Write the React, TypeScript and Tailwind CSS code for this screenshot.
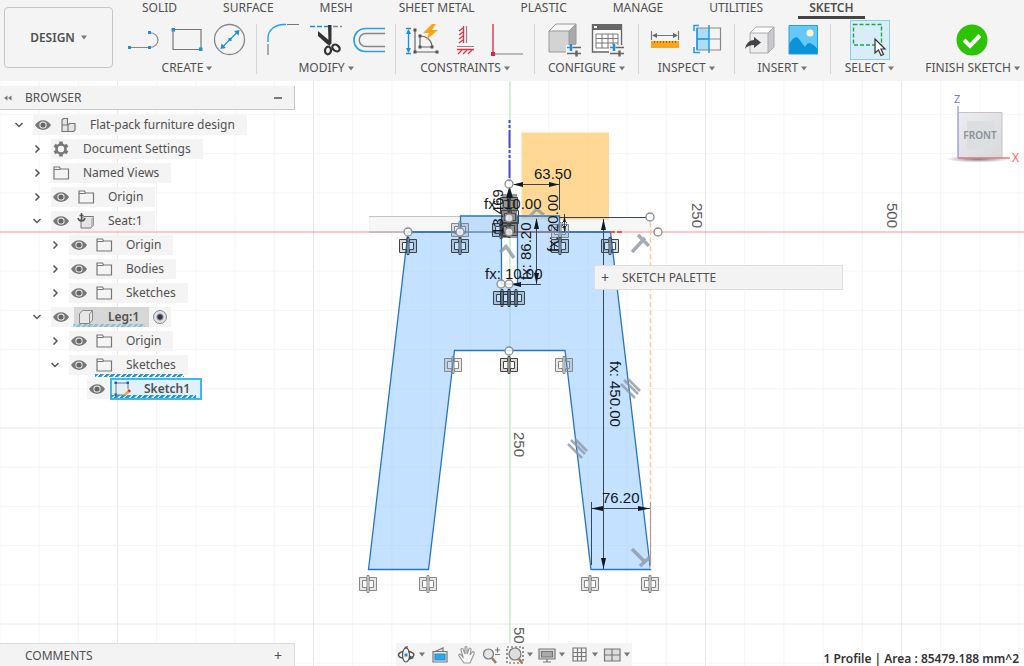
import type { ReactNode } from "react";

type ToolGroupProps = {
  label: string;
  className?: string;
  children: ReactNode;
};

type TreeItem = {
  name: string;
  level: 0 | 1 | 2 | 3;
  open?: boolean;
  icon: "component" | "gear" | "folder" | "anchored" | "body" | "sketch";
  state?: "active" | "touched" | "selected";
};

const tabs = ["SOLID", "SURFACE", "MESH", "SHEET METAL", "PLASTIC", "MANAGE", "UTILITIES", "SKETCH"];

const tree: TreeItem[] = [
  { name: "Flat-pack furniture design", level: 0, open: true, icon: "component" },
  { name: "Document Settings", level: 1, open: false, icon: "gear" },
  { name: "Named Views", level: 1, open: false, icon: "folder" },
  { name: "Origin", level: 1, open: false, icon: "folder" },
  { name: "Seat:1", level: 1, open: true, icon: "anchored" },
  { name: "Origin", level: 2, open: false, icon: "folder" },
  { name: "Bodies", level: 2, open: false, icon: "folder" },
  { name: "Sketches", level: 2, open: false, icon: "folder" },
  { name: "Leg:1", level: 1, open: true, icon: "body", state: "active" },
  { name: "Origin", level: 2, open: false, icon: "folder" },
  { name: "Sketches", level: 2, open: true, icon: "folder", state: "touched" },
  { name: "Sketch1", level: 3, icon: "sketch", state: "selected" },
];

const indentClassName: Record<TreeItem["level"], string> = {
  0: "pl-[10px]",
  1: "pl-[28px]",
  2: "pl-[46px]",
  3: "pl-[64px]",
};

function Caret() {
  return (
    <svg aria-hidden="true" className="h-[5px] w-[6px] shrink-0" viewBox="0 0 6 5">
      <path d="M0 0.5H6L3 4.5Z" fill="#777" />
    </svg>
  );
}

function Tool({ label, children }: { label: string; children: ReactNode }) {
  return (
    <button type="button" aria-label={label} className="flex h-10 w-8 shrink-0 items-center justify-center">
      <svg className="h-8 w-8 overflow-visible" viewBox="0 0 32 32" fill="none">
        {children}
      </svg>
    </button>
  );
}

function ToolGroup({ label, className = "px-[10px]", children }: ToolGroupProps) {
  return (
    <div className={`flex flex-col items-center ${className}`}>
      <div className="flex gap-[11px]">{children}</div>
      <button type="button" className="flex h-4 items-center gap-[3px] whitespace-nowrap">
        {label}
        <Caret />
      </button>
    </div>
  );
}

function Divider() {
  return <div className="mt-1 h-[50px] w-px shrink-0 bg-[#d6d6d6]" />;
}

function Sliders() {
  return (
    <g>
      <path d="M17 21H32V31H17Z" fill="#f4f4f4" />
      <path d="M18 23.5H23" stroke="#1f8fdc" strokeWidth="1.5" />
      <path d="M22 20V27" stroke="#1f8fdc" strokeWidth="2.5" />
      <path d="M23.5 23.5H32M18 29.5H32" stroke="#666" strokeWidth="1.5" />
      <path d="M27.5 26.5V32.5" stroke="#666" strokeWidth="2.5" />
    </g>
  );
}

function Toolbar() {
  return (
    <header className="flex shrink-0 gap-[5px] overflow-hidden bg-[#f4f4f4] pb-[5px] pl-1">
      <button
        type="button"
        className="mt-[7px] flex h-[61px] w-[109px] shrink-0 items-center justify-center gap-[6px] rounded border border-[#c6c6c6] font-semibold"
      >
        DESIGN
        <Caret />
      </button>
      <div className="min-w-0 flex-1">
        <nav className="flex h-5 gap-6 pl-[13px]">
          {tabs.map((tab) => (
            <a
              key={tab}
              href="#"
              className={`h-[19px] border-b-[3px] px-[11px] leading-4 whitespace-nowrap ${
                tab === "SKETCH" ? "border-[#444] font-semibold" : "border-transparent"
              }`}
            >
              {tab}
            </a>
          ))}
        </nav>
        <div className="flex">
          <ToolGroup label="CREATE">
            <Tool label="Line">
              <path d="M2 23.5H21M21 8.5C33 8.5 33 23.5 21 23.5" stroke="#888" strokeWidth="1.2" />
              <path d="M0 22H3V25H0ZM20 22H23V25H20ZM20 7H23V10H20Z" fill="#1f8fdc" />
            </Tool>
            <Tool label="Rectangle">
              <path d="M2 5.5H30V25.5H2Z" stroke="#777" strokeWidth="1.2" />
              <path d="M0.5 4H4V7.5H0.5ZM28 23.5H31.5V27H28Z" fill="#1f8fdc" />
            </Tool>
            <Tool label="Circle">
              <circle cx="15.5" cy="15.5" r="15" stroke="#888" strokeWidth="1.3" />
              <path d="M9 22.5L23 8.5" stroke="#1f8fdc" strokeWidth="1.3" />
              <path d="M25.5 6L24.5 11.5L20 7ZM6.5 25L7.5 19.5L12 24ZM14.5 14H17.5V17H14.5Z" fill="#1f8fdc" />
            </Tool>
          </ToolGroup>
          <Divider />
          <ToolGroup label="MODIFY">
            <Tool label="Fillet">
              <path d="M1 18V14C1 6 8 0.5 17 0.5H19" stroke="#2a9fe8" strokeWidth="1.4" />
              <path d="M1 20V31M20 0.5H32" stroke="#777" strokeWidth="1.2" />
            </Tool>
            <Tool label="Trim">
              <path d="M0 2.5H18" stroke="#1f8fdc" strokeWidth="1.3" strokeDasharray="5 2" />
              <path d="M23 2.5H32" stroke="#888" strokeWidth="1.3" strokeDasharray="5 2" />
              <path d="M8 7L21 18L20 22L17 20L8 12ZM18 1H21.5V20L18.5 19Z" fill="#333" />
              <ellipse cx="18" cy="26.5" rx="3" ry="3.8" stroke="#333" strokeWidth="2.2" transform="rotate(10 18 26.5)" />
              <ellipse cx="26" cy="24" rx="4" ry="3" stroke="#333" strokeWidth="2.2" transform="rotate(35 26 24)" />
            </Tool>
            <Tool label="Offset">
              <path d="M32 4.5H13C-3 4.5 -3 27.5 13 27.5H32" stroke="#2a9fe8" strokeWidth="1.6" />
              <path d="M32 9.5H13C4 9.5 4 22.5 13 22.5H32" stroke="#888" strokeWidth="1.5" />
            </Tool>
          </ToolGroup>
          <Divider />
          <ToolGroup label="CONSTRAINTS">
            <Tool label="Auto constrain">
              <path d="M2.5 6V28M0 4.5H5M0 29.5H5" stroke="#1f8fdc" strokeWidth="1.3" />
              <path d="M2.5 5L5 10H0ZM2.5 29L0 24H5Z" fill="#1f8fdc" />
              <path d="M9 6V28H31M14 12V23H26C26 17 21 12 14 12" stroke="#666" strokeWidth="1.2" />
              <path d="M7.5 4.5H10.5V7.5H7.5ZM7.5 26.5H10.5V29.5H7.5ZM29.5 26.5H32.5V29.5H29.5ZM12.5 10.5H15.5V13.5H12.5ZM12.5 21.5H15.5V24.5H12.5ZM24.5 21.5H27.5V24.5H24.5Z" fill="#555" />
              <path d="M26 0L17 9H23L20 16L32 6H26L30 0Z" fill="#fda512" />
            </Tool>
            <Tool label="Horizontal or vertical">
              <path d="M14.5 2V19M8 25.5H25" stroke="#dc3545" strokeWidth="1.4" />
              <path d="M17.5 2V19M8 22.5H25" stroke="#888" strokeWidth="1.2" />
              <path d="M14 4L10 7M14 8L10 11M14 12L10 15M14 16L10 19M13 26L9 30M18 26L14 30M23 26L19 30" stroke="#dc3545" strokeWidth="1.2" />
            </Tool>
            <Tool label="Coincident">
              <path d="M1 0V28" stroke="#dc2545" strokeWidth="1.3" />
              <path d="M3 30H31" stroke="#999" strokeWidth="1.3" />
              <path d="M-1 28H3V32H-1Z" fill="#dc2545" />
            </Tool>
          </ToolGroup>
          <Divider />
          <ToolGroup label="CONFIGURE" className="px-[13px]">
            <Tool label="Configure model">
              <path d="M0 7L7 0H27L20 7Z" fill="#f7f7f7" />
              <path d="M20 7L27 0V21L20 28Z" fill="#aaa" />
              <path d="M0 7H20V28H0Z" fill="#d3d3d3" />
              <path d="M0 7L7 0H27V20M0 7V28H20V7M0 7H20L27 0" stroke="#999" />
              <Sliders />
            </Tool>
            <Tool label="Configuration table">
              <path d="M0.5 1H29.5V28H0.5Z" fill="#fff" stroke="#666" strokeWidth="1.4" />
              <path d="M0 0H30V6H0Z" fill="#666" />
              <path d="M2 2H5V4H2Z" fill="#fff" />
              <path d="M4 10H26V24H4ZM4 14.5H26M4 19H26M10 10V24M16 10V24M21 10V24" stroke="#777" />
              <Sliders />
            </Tool>
          </ToolGroup>
          <Divider />
          <ToolGroup label="INSPECT">
            <Tool label="Measure">
              <path d="M2.5 7V16M29.5 7V16M4 11.5H28" stroke="#777" strokeWidth="1.2" />
              <path d="M3 11.5L8 9V14ZM29 11.5L24 9V14Z" fill="#666" />
              <path d="M2 17H30V24H2Z" fill="#fba51a" />
              <path d="M5.5 17V19M8.5 17V19M11.5 17V19M14.5 17V19M17.5 17V19M20.5 17V19M23.5 17V19M26.5 17V19" stroke="#a86500" />
            </Tool>
            <Tool label="Section">
              <path d="M5 4H17V26H5Z" fill="#abdcf8" />
              <path d="M17 4H28.5V26H5V4H17M5 15H28.5" stroke="#888" strokeWidth="1.2" />
              <path d="M17 1V29M7 1.5H2V7M2 23V28.5H8M5 4V26M5 15H17" stroke="#1f9ae5" strokeWidth="1.5" />
            </Tool>
          </ToolGroup>
          <Divider />
          <ToolGroup label="INSERT">
            <Tool label="Insert derive">
              <path d="M5 10L12 3H29L23 9Z" fill="#fff" />
              <path d="M23 9L29 3V23L23 29Z" fill="#c8c8ce" />
              <path d="M5 9H23V29H5Z" fill="#ededf0" />
              <path d="M5 9L11 3H29V23L23 29H5V9H23L29 3M23 9V29" stroke="#aaa" />
              <path d="M0 25C1 19 5 16 9 16V13L16 18.5L9 24V21C5 21 2 22 0 25Z" fill="#444" />
            </Tool>
            <Tool label="Insert image">
              <path d="M1 1.5H29.5V30H1Z" fill="#64c8fb" />
              <path d="M1 20C5 14 8 11 11 15L17 23C20 17 23 18 29.5 25V30H1Z" fill="#0a93d6" />
              <circle cx="22" cy="9" r="3.5" fill="#fdf7c8" />
              <path d="M1 1.5H29.5V30H1Z" stroke="#2a9fd8" />
            </Tool>
          </ToolGroup>
          <Divider />
          <ToolGroup label="SELECT" className="px-[14px]">
            <button
              type="button"
              aria-label="Select"
              className="flex h-10 w-10 items-center justify-center border border-[#8cccea] bg-[#d8edf7]"
            >
              <svg className="h-8 w-8 overflow-visible" viewBox="0 0 32 32" fill="none">
                <path d="M-0.5 0.5H27.5V21H-0.5Z" stroke="#1fa64a" strokeWidth="1.4" strokeDasharray="4 2" />
                <path d="M21 15V29L24.5 26L27 31.5L29.5 30.5L27 25H31Z" fill="#fff" stroke="#333" strokeWidth="1.2" />
              </svg>
            </button>
          </ToolGroup>
          <ToolGroup label="FINISH SKETCH" className="ml-auto pr-1">
            <Tool label="Finish sketch">
              <circle cx="15" cy="16" r="15.5" fill="#2cc302" />
              <path d="M7 16L13 22L23 11.5" stroke="#fff" strokeWidth="4" />
            </Tool>
          </ToolGroup>
        </div>
      </div>
    </header>
  );
}

function EyeIcon() {
  return (
    <svg className="h-4 w-4" viewBox="0 0 16 16">
      <path d="M0 8C4 1.5 12 1.5 16 8C12 14.5 4 14.5 0 8Z" fill="#777" />
      <circle cx="8" cy="8" r="3.6" fill="#f4f4f4" />
      <circle cx="8" cy="8" r="2.6" fill="#666" />
    </svg>
  );
}

function NodeIcon({ icon }: { icon: TreeItem["icon"] }) {
  return (
    <svg aria-hidden="true" className="h-4 w-4 shrink-0 overflow-visible" viewBox="0 0 16 16" fill="none">
      {icon === "component" && (
        <g stroke="#777" strokeWidth="1.2" fill="#e4e4e4">
          <path d="M2 3L3.5 1.5H7.5V8H2ZM2 8H8V14.5H2ZM8 8L9.5 6.5H15V13L13.5 14.5H8Z" />
        </g>
      )}
      {icon === "gear" && (
        <g stroke="#777">
          <circle cx="8" cy="8" r="4.5" strokeWidth="2.6" />
          <path d="M8 0.5V3M8 13V15.5M1.5 4.2L3.7 5.5M12.3 10.5L14.5 11.8M1.5 11.8L3.7 10.5M12.3 5.5L14.5 4.2" strokeWidth="3.6" />
        </g>
      )}
      {icon === "folder" && (
        <path d="M1 14V2H6.5L7.5 4H15.5V14ZM1 4.5H7.5" stroke="#777" strokeWidth="1.2" />
      )}
      {icon === "anchored" && (
        <g>
          <path d="M3 6L6 3.5H15.5V12L13 15H3Z" fill="#e4e4e4" stroke="#777" />
          <path d="M13 6L15.5 3.5V12L13 15Z" fill="#bbb" />
          <path d="M3.5 0V8M0 5C1 9 6 9 7 5M1.5 2.5H5.5" stroke="#555" strokeWidth="1.5" />
        </g>
      )}
      {icon === "body" && (
        <path d="M1.5 5L4.5 1.5H14.5V11L11.5 14.5H1.5ZM11.5 14.5V5L14.5 1.5" fill="#e8e8e8" stroke="#888" />
      )}
      {icon === "sketch" && (
        <g>
          <path d="M2 2V14H12M2 2H14V8" stroke="#777" />
          <path d="M0.5 0.5H3V3H0.5ZM12.5 0.5H15V3H12.5ZM0.5 12.5H3V15H0.5Z" fill="#2458d8" />
          <path d="M9 14L14 9L16 11L11 15Z" fill="#f7a51b" />
          <path d="M13.5 9.5L15 8L17 10L15.5 11.5Z" fill="#dc2545" />
        </g>
      )}
    </svg>
  );
}

function TreeRow({ item }: { item: TreeItem }) {
  const hasEye = item.icon !== "gear" && item.name !== "Named Views";
  const boxed = item.state === "active" || item.state === "selected";

  return (
    <li className={`flex h-6 items-center ${indentClassName[item.level]}`}>
      {item.open === undefined ? (
        <span className="w-[18px]" />
      ) : (
        <button type="button" aria-label={`Toggle ${item.name}`} className="flex w-[18px] justify-center">
          <svg className="h-2 w-2" viewBox="0 0 8 8" fill="none" stroke="#555" strokeWidth="1.5">
            <path d={item.open ? "M0.5 2L4 5.5L7.5 2" : "M2.5 0.5L6 4L2.5 7.5"} />
          </svg>
        </button>
      )}
      <div className="ml-[5px] flex h-5 items-center bg-[#f4f4f4] pl-[2px]">
        {hasEye && (
          <button type="button" aria-label={`Show or hide ${item.name}`} className={boxed ? "mr-[5px]" : "mr-[9px]"}>
            <EyeIcon />
          </button>
        )}
        <div
          className={`relative flex items-center gap-[14px] ${
            item.state === "active"
              ? "h-5 bg-[#d7d7d7] pr-[10px] pl-1 font-semibold"
              : item.state === "selected"
                ? "h-[22px] border-2 border-[#3db8e8] bg-[#e0f1f9] pr-[10px] pl-[2px] font-semibold"
                : "h-5 pr-3"
          }`}
        >
          <NodeIcon icon={item.icon} />
          <span>{item.name}</span>
          {item.state && (
            <span
              className={`absolute right-1 bottom-0 -left-px h-[3px] bg-[repeating-linear-gradient(135deg,#1b9ad6_0_2px,transparent_3px_4px)] ${
                item.state === "active" ? "opacity-40" : item.state === "touched" ? "-mb-[2px]" : ""
              }`}
            />
          )}
        </div>
        {item.state === "active" && (
          <input
            type="radio"
            name="active-component"
            aria-label={`Activate ${item.name}`}
            defaultChecked
            className="mx-1 h-[14px] w-[14px] appearance-none rounded-full border border-[#888] bg-[radial-gradient(circle,#334_0_2px,#dde3ee_4px)]"
          />
        )}
      </div>
    </li>
  );
}

function Browser() {
  return (
    <aside className="w-[295px] pt-[5px]">
      <div className="flex h-6 items-center border-r border-b border-[#c9c9c9] bg-[#f3f3f3] pr-3 pl-1">
        <button type="button" aria-label="Collapse browser" className="mr-[13px]">
          <svg className="h-2 w-2" viewBox="0 0 8 8" fill="#777">
            <path d="M3.5 1.5V6.5L0 4ZM7.5 1.5V6.5L4 4Z" />
          </svg>
        </button>
        <h2>BROWSER</h2>
        <button type="button" aria-label="Minimize" className="ml-auto h-[2px] w-2 bg-[#777]" />
      </div>
      <ul className="pt-[3px]">
        {tree.map((item, index) => (
          <TreeRow key={index} item={item} />
        ))}
      </ul>
    </aside>
  );
}

function ViewCube() {
  return (
    <svg aria-label="View cube" className="mt-2 h-20 w-20 shrink-0" viewBox="944 89 80 80">
      <defs>
        <linearGradient id="cube" x1="0" y1="0" x2="1" y2="1">
          <stop offset="0" stopColor="#ededef" />
          <stop offset="1" stopColor="#d8d8da" />
        </linearGradient>
        <radialGradient id="cube-shadow">
          <stop offset="0" stopColor="#777" />
          <stop offset="1" stopColor="#777" stopOpacity="0" />
        </radialGradient>
      </defs>
      <ellipse cx="978" cy="159" rx="32" ry="3.5" fill="url(#cube-shadow)" />
      <path d="M958.5 112.5H1002V157.5H958.5Z" fill="url(#cube)" stroke="#c4c4c4" />
      <path d="M967 121H994V149H967Z" fill="#dcdfe2" />
      <path d="M958 106V158" stroke="#a4a4f5" strokeWidth="1.5" />
      <path d="M958 158H1010" stroke="#e87a82" strokeWidth="1.5" />
      <text x="980" y="139" textAnchor="middle" fontSize="10" fontWeight="600" fill="#8b9097">FRONT</text>
      <text x="954" y="103" fontSize="11" fill="#7474ee">Z</text>
      <text x="1012" y="162" fontSize="12" fill="#ee6b6b">X</text>
    </svg>
  );
}

const symmetryMarks = [
  [408, 246, "#3a4450"], [460, 230, "#7b8894"], [460, 246, "#3a4450"], [501, 230, "#3a4450"],
  [560, 231, "#7b8894"], [560, 246, "#3a4450"], [610, 246, "#3a4450"],
  [502, 298, "#3a4450"], [509, 298, "#26333d"], [516, 298, "#3a4450"],
  [453, 365, "#888"], [509, 365, "#444"], [564, 365, "#888"],
  [368, 584, "#888"], [428, 584, "#888"], [590, 584, "#888"], [650, 584, "#888"],
  [509, 204, "#444"], [510, 217, "#444"], [509, 229, "#444"],
] as const;

const sketchPoints = [
  [408, 232], [460, 232], [509, 184], [509, 218], [509, 232], [501, 284], [509, 284], [509, 351],
  [650, 217], [658, 232],
];

const gridSteps = Array.from({ length: 31 }, (_, index) => index - 15);

function SketchCanvas() {
  return (
    <svg
      aria-label="Sketch canvas"
      className="absolute inset-0 h-full w-full [font-family:'Liberation_Sans',Arial,sans-serif]"
      viewBox="0 81 1024 585"
      preserveAspectRatio="xMidYMid slice"
      fill="none"
    >
      {gridSteps.map((step) => (
        <g key={step} stroke={step % 5 === 0 ? "#e8e8e8" : "#f5f5f5"}>
          <path d={`M${509.5 + step * 39.2} 0V700`} />
          {step !== 0 && <path d={`M0 ${232 + step * 39.2}H1024`} />}
        </g>
      ))}
      <path d="M510 0V700" stroke="#c4f2c6" strokeWidth="1.5" />

      {/* hidden seat edge and the reference face */}
      <path d="M369 217H650V231H369Z" fill="#f6f6f6" />
      <path d="M369 216.5H460" stroke="#c4c4c4" />
      <path d="M521.5 132.5H609V219.5H521.5Z" fill="#ffce7a" fillOpacity="0.8" />

      {/* leg profile */}
      <path
        d="M460.5 216H501.5V284H517.5V216H559.5V232H610.5L650.5 569.5H591L565 350.5H454.5L428.5 569.5H368.5L408 232H460.5Z"
        fill="#89c4ff"
        fillOpacity="0.5"
        stroke="#2674c4"
        strokeWidth="1.3"
      />
      <path d="M0 232H369M610 232H1024" stroke="#ff8f8f" strokeWidth="1.2" />
      <path d="M369 232H408" stroke="#8a7a80" />
      <path d="M408 232H610" stroke="#2c5f94" />
      <path d="M517 232H558" stroke="#a05a72" />
      <path d="M610 232H622" stroke="#e33" strokeWidth="1.3" strokeDasharray="5 2" />
      <path d="M509.5 120V182" stroke="#4c44dc" strokeWidth="2" strokeDasharray="3 2 3 2 18 2" />
      <path d="M650.5 222V569" stroke="#ffc8a0" strokeWidth="1.5" strokeDasharray="5 3" />
      <path d="M650.5 502V566" stroke="#b79888" />

      {/* parallel and perpendicular marks */}
      <g stroke="#8d98a2" strokeOpacity="0.8" strokeWidth="2.5">
        <path d="M621 384L635 398M624 380L638 394M628 379L640 391M568 444L582 458M571 440L585 454M575 439L587 451" />
        <path d="M632 252L645 238M638 235L649 246M632 549L644 561M640 566L649 558M500 252L507 246M505 245L514 258" strokeWidth="3.5" />
        <path d="M535 208L544 215M537 209L530 216" strokeWidth="3" />
      </g>

      {/* symmetry marks */}
      <path d="M502 194H517V238H502Z" fill="#444" fillOpacity="0.55" />
      {symmetryMarks.map(([x, y, color]) => (
        <g key={`${x}-${y}`} transform={`translate(${x} ${y})`} stroke={color} fill={color} fillOpacity="0.2">
          <path d="M-1.5 -6.5H-8.5V6.5H-1.5V3.5H-5.5V-3.5H-1.5ZM1.5 -6.5H8.5V6.5H1.5V3.5H5.5V-3.5H1.5Z" />
          <path d="M-1 -8.5H1V8.5H-1Z" />
        </g>
      ))}

      {/* dimensions */}
      <g stroke="#3a4654">
        <path d="M514 184.5H560M559.5 178V210M509.5 188V228M536.5 219V284M517 284.5H541M564.5 214V232M559 217.5H646M603.5 219V569M591 508.5H650M591.5 502V565" />
      </g>
      <g fill="#101820">
        <path d="M513 184.5L523 182V187ZM559 184.5L549 182V187ZM509.5 186L506 198H513ZM536.5 218L534 229H539ZM536.5 284L534 273H539ZM564.5 232L562 222H567ZM564.5 216L562 226H567ZM603.5 219L601 230H606ZM603.5 569L601 558H606ZM591 508.5L603 506V511ZM650 508.5L638 506V511ZM511 284.5L521 282V287Z" />
      </g>
      {sketchPoints.map(([x, y]) => (
        <circle key={`${x}-${y}`} cx={x} cy={y} r="4" fill="#fff" fillOpacity="0.8" stroke="#8c8c8c" strokeWidth="1.3" />
      ))}
      <g fill="#111820" fontSize="15">
        <text x="534" y="179">63.50</text>
        <text x="484" y="209">fx: 10.00</text>
        <text x="485" y="279">fx: 10.00</text>
        <text x="602" y="503">76.20</text>
        <text transform="translate(503 235) rotate(-90)">13.469</text>
        <text transform="translate(558 252) rotate(-90)">fx: 20.00</text>
        <text transform="translate(531 280) rotate(-90)">fx: 86.20</text>
        <text transform="translate(610 361) rotate(90)">fx: 450.00</text>
      </g>
      <g fill="#5c5c5c" fontSize="15">
        <text transform="translate(514 432) rotate(90)">250</text>
        <text transform="translate(514 627) rotate(90)">500</text>
        <text transform="translate(692 203) rotate(90)">250</text>
        <text transform="translate(887 203) rotate(90)">500</text>
      </g>
    </svg>
  );
}

function NavTool({ label, menu, children }: { label: string; menu?: boolean; children: ReactNode }) {
  return (
    <button type="button" aria-label={label} className={`flex items-center ${menu ? "gap-[3px]" : "px-px"}`}>
      <svg className="h-[18px] w-[18px] overflow-visible" viewBox="0 0 18 18" fill="none" stroke="#777" strokeWidth="1.2">
        {children}
      </svg>
      {menu && <Caret />}
    </button>
  );
}

function NavBar() {
  return (
    <div className="ml-[101px] flex h-[23px] w-[236px] items-center justify-between bg-[#f4f4f4] px-[2px]">
      <NavTool label="Orbit" menu>
        <ellipse cx="8" cy="9" rx="3.5" ry="7" stroke="#555" />
        <path d="M5 5.5C-1 7 -1 11 5 12M10 5.5C16 6 18 9 13 12" stroke="#555" strokeWidth="1.5" />
        <path d="M11 9L16 12L11 14ZM6 1L9 3L10 0Z" fill="#555" stroke="none" />
        <path d="M6.5 7.5H9.5V10.5H6.5Z" fill="#1f8fdc" stroke="none" />
      </NavTool>
      <NavTool label="Look at">
        <path d="M3 6L12 2V6M2 5.5H16V16H2Z" fill="#eee" />
        <path d="M4 8H14V14H4Z" fill="#35a4e4" stroke="#1f8fdc" />
      </NavTool>
      <NavTool label="Pan">
        <path d="M7 17L2 10C1 8 3 7.5 4 9L6 11L4 4C4 2 6 2 6.5 4L8 8V2C8 0 10 0 10 2V8L12 3C12.5 1.5 14.5 2 14 4L13 9L15 6.5C16 5 18 6 17 8L13 17Z" fill="#f8f8f8" stroke="#999" />
      </NavTool>
      <NavTool label="Zoom">
        <circle cx="6.5" cy="8" r="5" fill="#e4e4e4" />
        <path d="M10 12L14 17" stroke="#a97850" strokeWidth="2.5" />
        <path d="M13 4H18M15.5 1.5V6.5M13 8.5H18" />
      </NavTool>
      <NavTool label="Fit" menu>
        <path d="M1 1H17V17H1Z" strokeDasharray="2 2" stroke="#555" />
        <circle cx="9" cy="8" r="6" fill="#ddd" />
        <path d="M13 13L16 17" stroke="#a97850" strokeWidth="2.5" />
      </NavTool>
      <NavTool label="Display settings" menu>
        <path d="M1 3H17V13H1Z" fill="#d8d8d8" />
        <path d="M3.5 5.5H14.5V11H3.5Z" fill="#aaa" />
        <path d="M9 13V16M5 16H13" />
      </NavTool>
      <NavTool label="Grid and snaps" menu>
        <path d="M2 2H15V15H2ZM2 6.5H15M2 10.5H15M6.5 2V15M10.5 2V15" />
      </NavTool>
      <NavTool label="Viewports" menu>
        <path d="M1.5 3H17V15H1.5ZM1.5 9H17M9 3V15" fill="#ddd" />
      </NavTool>
    </div>
  );
}

export default function App() {
  return (
    <div className="flex h-screen flex-col overflow-hidden bg-white text-xs text-[#505050] [font-family:'Noto_Sans',sans-serif]">
      <Toolbar />
      <main className="relative min-h-0 flex-1 overflow-hidden">
        <SketchCanvas />
        <div className="relative flex h-full flex-col justify-between">
          <div className="flex justify-between">
            <Browser />
            <ViewCube />
          </div>
          <footer className="flex items-end">
            <div className="flex h-[23px] w-[295px] items-center justify-between border-t border-r border-[#dcdcdc] bg-[#f3f3f3] pt-px pr-3 pl-[25px]">
              <h2>COMMENTS</h2>
              <button type="button" aria-label="Expand comments" className="text-sm leading-4">+</button>
            </div>
            <NavBar />
            <p className="ml-auto pr-[5px] leading-[14px] font-semibold whitespace-nowrap text-[#333]">
              1 Profile | Area : 85479.188 mm^2
            </p>
          </footer>
        </div>
        <section className="absolute top-[184px] left-[58%] flex h-[25px] w-[249px] items-center gap-[13px] border border-[#dedede] bg-[#f3f3f3] pl-[6px]">
          <button type="button" aria-label="Expand palette" className="text-sm leading-4">+</button>
          <h2>SKETCH PALETTE</h2>
        </section>
      </main>
    </div>
  );
}
